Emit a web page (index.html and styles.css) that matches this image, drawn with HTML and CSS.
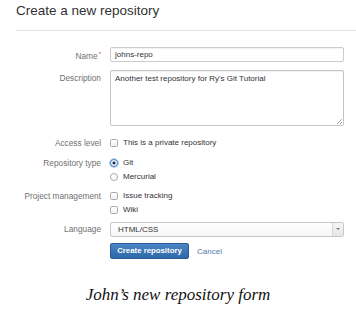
FILE: index.html
```html
<!DOCTYPE html>
<html lang="en">
<head>
  <meta charset="UTF-8" />
  <meta name="viewport" content="width=device-width, initial-scale=1" />
  <title>Create a new repository</title>
  <link rel="stylesheet" href="styles.css">
</head>
<body>
  <div class="page">
    <h1 class="title">Create a new repository</h1>
    <hr class="rule">

    <form class="repo-form">
      <div class="field field-name">
        <label class="label">Name<span class="req">*</span></label>
        <div class="control"><div class="input">johns-repo</div></div>
      </div>

      <div class="field field-desc">
        <label class="label">Description</label>
        <div class="control">
          <div class="textarea">Another test repository for Ry's Git Tutorial<span class="grip"></span></div>
        </div>
      </div>

      <div class="field field-access">
        <label class="label">Access level</label>
        <div class="control options">
          <div class="option"><span class="box"></span>This is a private repository</div>
        </div>
      </div>

      <div class="field field-type">
        <label class="label">Repository type</label>
        <div class="control options">
          <div class="option"><span class="radio checked"></span>Git</div>
          <div class="option"><span class="radio"></span>Mercurial</div>
        </div>
      </div>

      <div class="field field-pm">
        <label class="label">Project management</label>
        <div class="control options">
          <div class="option"><span class="box"></span>Issue tracking</div>
          <div class="option"><span class="box"></span>Wiki</div>
        </div>
      </div>

      <div class="field field-lang">
        <label class="label">Language</label>
        <div class="control">
          <div class="select"><span class="select-value">HTML/CSS</span><span class="select-arrow"></span></div>
        </div>
      </div>

      <div class="field field-actions">
        <span class="label"></span>
        <div class="control actions">
          <span class="btn">Create repository</span>
          <a class="cancel" href="#">Cancel</a>
        </div>
      </div>
    </form>

    <p class="caption">John’s new repository form</p>
  </div>
</body>
</html>
```

FILE: styles.css
```css
body {
  margin: 0;
  background: #fff;
  font-family: "Liberation Sans", Arial, sans-serif;
  color: #333;
}
.page {
  width: 356px;
  height: 310px;
  overflow: hidden;
}
.title {
  margin: 0;
  padding: 3px 0 0 16px;
  font-size: 13.5px;
  font-weight: normal;
  line-height: 16px;
  color: #333;
}
.rule {
  margin: 11px 0 0 16px;
  border: none;
  border-top: 1px solid #e4e4e4;
  height: 0;
}
.repo-form {
  padding-left: 16px;
  font-size: 8px;
}
.field {
  display: flex;
}
.label {
  width: 85px;
  margin-right: 9px;
  text-align: right;
  color: #707070;
  font-size: 8.3px;
  line-height: 12px;
}
.req {
  color: #d04437;
  font-size: 6px;
  vertical-align: 3px;
  margin-left: 1px;
}
.control {
  width: 234px;
}
.field-name {
  margin-top: 16px;
}
.field-name .label {
  line-height: 15px;
}
.input {
  box-sizing: border-box;
  height: 15px;
  border: 1px solid #ccc;
  border-radius: 2px;
  padding: 0 4px;
  line-height: 13px;
  color: #333;
  box-shadow: inset 0 1px 1px rgba(0,0,0,0.06);
}
.field-desc {
  margin-top: 6px;
}
.field-desc .label {
  line-height: 16px;
}
.textarea {
  position: relative;
  box-sizing: border-box;
  height: 56px;
  border: 1px solid #c4c4c4;
  border-radius: 2px;
  padding: 2px 4px;
  line-height: 12px;
  box-shadow: inset 0 1px 1px rgba(0,0,0,0.06);
}
.grip {
  position: absolute;
  right: 1px;
  bottom: 1px;
  width: 5px;
  height: 5px;
  background: linear-gradient(135deg, transparent 45%, #aaa 45%, #aaa 55%, transparent 55%, transparent 75%, #aaa 75%, #aaa 85%, transparent 85%);
}
.field-access {
  margin-top: 11px;
}
.field-type {
  margin-top: 8px;
}
.field-pm {
  margin-top: 7px;
}
.options {
  display: flex;
  flex-direction: column;
  gap: 2px;
}
.option {
  display: flex;
  align-items: center;
  height: 12px;
  line-height: 12px;
  color: #333;
}
.box {
  width: 6px;
  height: 6px;
  border: 1px solid #aaa;
  border-radius: 1.5px;
  margin-right: 5px;
  background: linear-gradient(#fff, #f0f0f0);
}
.radio {
  width: 6px;
  height: 6px;
  border: 1px solid #aaa;
  border-radius: 50%;
  margin-right: 5px;
  background: #fff;
}
.radio.checked {
  border-color: #3b79c7;
  background: radial-gradient(circle, #1d2f4a 0 1.3px, #fff 1.8px);
  box-shadow: 0 0 0 0.6px #6aa0e0;
}
.field-lang {
  margin-top: 6px;
}
.field-lang .label {
  line-height: 15px;
}
.select {
  box-sizing: border-box;
  height: 15px;
  display: flex;
  border: 1px solid #c8c8c8;
  border-radius: 2px;
  background: linear-gradient(#fff, #f6f6f6);
}
.select-value {
  flex: 1;
  padding-left: 7px;
  line-height: 13px;
  color: #333;
}
.select-arrow {
  width: 10px;
  border-left: 1px solid #d6d6d6;
  background: linear-gradient(#f5f5f5, #e6e6e6);
  position: relative;
}
.select-arrow::after {
  content: "";
  position: absolute;
  left: 3px;
  top: 5px;
  border-left: 2px solid transparent;
  border-right: 2px solid transparent;
  border-top: 2px solid #777;
}
.field-actions {
  margin-top: 6px;
}
.actions {
  display: flex;
  align-items: center;
}
.btn {
  box-sizing: border-box;
  width: 79px;
  height: 16px;
  line-height: 14px;
  text-align: center;
  color: #fff;
  font-weight: bold;
  font-size: 7.8px;
  background: linear-gradient(#4a86c5, #2d68a8);
  border: 1px solid #2a5d95;
  border-radius: 2px;
}
.cancel {
  margin-left: 8px;
  color: #5277a8;
  text-decoration: none;
  font-size: 8px;
}
.caption {
  margin: 27px 0 0;
  line-height: 18px;
  text-align: center;
  font-family: "Liberation Serif", "DejaVu Serif", serif;
  font-style: italic;
  font-size: 17px;
  color: #111;
}
```
